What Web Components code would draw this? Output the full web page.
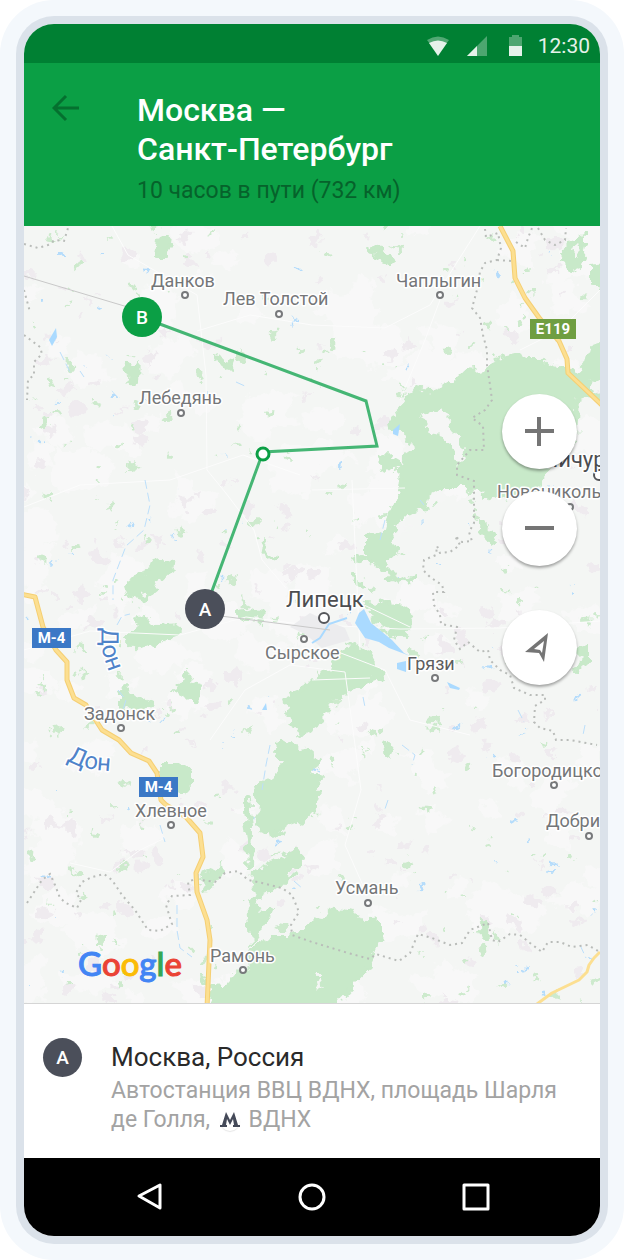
<!DOCTYPE html>
<html lang="ru">
<head>
<meta charset="utf-8">
<meta name="viewport" content="width=device-width, initial-scale=1">
<title>Москва — Санкт-Петербург</title>
<style>
  body {
    margin: 0;
    background: #fff;
    font-family: Roboto, "Liberation Sans", sans-serif;
  }
</style>
</head>
<body>
<phone-frame>
  <status-bar>12:30</status-bar>
  <route-header>
    <span slot="title">Москва —<br>Санкт-Петербург</span>
    <span slot="info">10 часов в пути (732 км)</span>
  </route-header>
  <route-map>
    <map-controls slot="controls"></map-controls>
  </route-map>
  <place-card>
    <point-badge slot="badge">A</point-badge>
    <span slot="name">Москва, Россия</span>
    <span slot="address">Автостанция ВВЦ ВДНХ, площадь Шарля де Голля, <metro-sign></metro-sign> ВДНХ</span>
  </place-card>
  <nav-bar></nav-bar>
</phone-frame>

<script>
function define(name, html, setup) {
    customElements.define(name, class extends HTMLElement {
        constructor() {
            super();
            const root = this.attachShadow({mode: 'open'});
            root.innerHTML = html;
            if (setup) setup(root);
        }
    });
}

define('phone-frame', `
<style>
    :host {
        display: flex;
        box-sizing: border-box;
        min-height: 100vh;
        padding: 16px;
        border-radius: 54px;
        background: #f4f8fc;
    }
    .bezel {
        display: flex;
        flex: 1;
        min-width: 0;
        padding: 8px;
        border-radius: 38px;
        background: #dbe2ea;
    }
    .screen {
        display: flex;
        flex-direction: column;
        flex: 1;
        min-width: 0;
        overflow: hidden;
        border-radius: 30px;
        background: #fff;
    }
</style>
<div class="bezel"><main class="screen"><slot></slot></main></div>`);

define('status-bar', `
<style>
    :host {
        display: flex;
        align-items: center;
        justify-content: flex-end;
        gap: 18px;
        padding: 8px 10px 3px;
        background: #008033;
        color: #e5f2ea;
        font-size: 21px;
        line-height: 28px;
    }
    svg { display: block; }
    .time { margin-left: -6px; }
</style>
<svg width="22" height="20" viewBox="0 0 22 20">
    <path d="M0 4Q11-3 22 4L19 8Q11 2 3 8Z" fill="#fff" opacity=".32"/>
    <path d="M2 7Q11 2 20 7L11 20Z" fill="#e5f2ea"/>
</svg>
<svg width="20" height="20" viewBox="0 0 20 20">
    <path d="M20 0V20H0Z" fill="#fff" opacity=".3"/>
    <path d="M10 10V20H0Z" fill="#e5f2ea"/>
</svg>
<svg width="21" height="22" viewBox="-4 0 21 22">
    <path d="M3 2V0H10V2H13V11H0V2Z" fill="#fff" opacity=".3"/>
    <path d="M0 11H13V21H0Z" fill="#e5f2ea"/>
</svg>
<span class="time"><slot></slot></span>`);

define('route-header', `
<style>
    :host {
        display: flex;
        align-items: flex-start;
        gap: 54px;
        padding: 28px 24px 19px;
        background: #0b9f45;
    }
    button {
        padding: 3px 4px;
        border: 0;
        background: none;
        cursor: pointer;
    }
    svg { display: block; }
    h1 {
        margin: 0;
        color: #fff;
        font-size: 32px;
        font-weight: 500;
        line-height: 39px;
    }
    p {
        margin: 0;
        padding-top: 6px;
        color: #06622b;
        font-size: 23px;
        line-height: 32px;
    }
</style>
<button type="button" aria-label="Назад">
    <svg width="27" height="28" viewBox="0 0 27 28" fill="none" stroke="#05702f" stroke-width="3">
        <path d="M27 14H3M14 2L2 14L14 26"/>
    </svg>
</button>
<div>
    <h1><slot name="title"></slot></h1>
    <p><slot name="info"></slot></p>
</div>`);

define('map-controls', `
<style>
    :host {
        display: flex;
        flex-direction: column;
        gap: 22px;
    }
    button {
        display: grid;
        place-items: center;
        width: 75px;
        height: 75px;
        padding: 0;
        border: 0;
        border-radius: 50%;
        background: #fff;
        box-shadow: 0 2px 3px rgba(0, 0, 0, .35);
        cursor: pointer;
    }
    .locate { margin-top: 22px; }
</style>
<button type="button" aria-label="Увеличить">
    <svg width="29" height="29" stroke="#757575" stroke-width="4"><path d="M0 14H29M14 0V29"/></svg>
</button>
<button type="button" aria-label="Уменьшить">
    <svg width="29" height="29" stroke="#757575" stroke-width="4"><path d="M0 14H29"/></svg>
</button>
<button class="locate" type="button" aria-label="Моё местоположение">
    <svg width="29" height="29">
        <path d="M23 0L0 19L14 20L19 29ZM19 8L17 20L15 17L9 16Z" fill="#757575" fill-rule="evenodd"/>
    </svg>
</button>`);

define('point-badge', `
<style>
    :host {
        display: grid;
        place-items: center;
        flex: none;
        width: 39px;
        height: 39px;
        border-radius: 50%;
        background: #4b4f5a;
        color: #fff;
        font-size: 19px;
        font-weight: 500;
    }
</style>
<slot></slot>`);

define('metro-sign', `
<style>
    :host {
        display: inline-block;
        width: 20px;
        margin: 0 3px 0 4px;
        border-radius: 50%;
        box-shadow: 0 1px 1px rgba(0, 0, 0, .1);
        vertical-align: -4px;
    }
    svg { display: block; }
</style>
<svg width="20" height="20" viewBox="0 0 20 20" role="img" aria-label="Метро">
    <path d="M6 1L10 9L14 1L18 14H20V16H13V14H14L13 8L10 14L7 8L6 14H7V16H0V14H2Z" fill="#444958"/>
</svg>`);

define('place-card', `
<style>
    :host {
        display: flex;
        align-items: flex-start;
        gap: 29px;
        padding: 34px 24px 24px 19px;
        background: #fff;
    }
    h2 {
        margin: 0;
        padding-top: 2px;
        color: #2a2a2a;
        font-size: 26px;
        font-weight: 400;
        line-height: 34px;
    }
    p {
        margin: 0;
        padding-top: 2px;
        color: #a3a3a3;
        font-size: 23px;
        line-height: 29px;
    }
</style>
<slot name="badge"></slot>
<div>
    <h2><slot name="name"></slot></h2>
    <p><slot name="address"></slot></p>
</div>`);

define('nav-bar', `
<style>
    :host {
        display: flex;
        justify-content: center;
        gap: 126px;
        padding: 20px 0;
        background: #000;
    }
    button {
        padding: 4px;
        border: 0;
        background: none;
        cursor: pointer;
    }
    svg {
        display: block;
        fill: none;
        stroke: #fff;
        stroke-width: 3;
        stroke-linejoin: round;
    }
</style>
<button type="button" aria-label="Назад"><svg width="30" height="30"><path d="M27 3V26L6 14Z"/></svg></button>
<button type="button" aria-label="Домой"><svg width="30" height="30"><circle cx="15" cy="15" r="12"/></svg></button>
<button type="button" aria-label="Недавние"><svg width="30" height="30"><path d="M3 3H27V27H3Z"/></svg></button>`);

// name, text x, baseline, dot x, dot y, class
const towns = [
    ['Данков', 151, 287, 185, 295],
    ['Лев Толстой', 223, 305, 279, 314],
    ['Чаплыгин', 396, 287, 440, 295],
    ['Лебедянь', 139, 404, 181, 413],
    ['Мичуринск', 539, 467, 599, 475, 'city'],
    ['Новоникольское', 497, 498, 570, 507],
    ['Липецк', 286, 607, 324, 618, 'city'],
    ['Сырское', 265, 659, 304, 639],
    ['Грязи', 407, 670, 435, 678, 'dark'],
    ['Задонск', 84, 720, 121, 728],
    ['Хлевное', 135, 817, 171, 825],
    ['Богородицкое', 492, 777, 554, 785],
    ['Добринка', 546, 827, 589, 836],
    ['Усмань', 335, 894, 368, 903],
    ['Рамонь', 210, 962, 243, 970]
];

const forests = [
    '405,403 415,388 432,391 452,383 465,371 489,368 494,358 503,356 515,353 525,358 539,358 550,369 560,366 575,373 585,363 590,346 604,341 604,378 588,381 592,392 604,395 604,403 588,396 578,398 576,440 545,473 542,487 529,497 512,497 500,494 485,500 475,487 443,487 442,494 432,507 420,508 405,517 398,530 390,535 397,552 382,568 367,560 367,537 385,533 390,513 399,488 402,466 412,443 402,429 392,432 390,423 398,410',
    '364,602 382,603 394,600 415,617 410,627 399,638 379,627',
    '337,650 355,643 365,650 375,667 381,676 370,680 352,690 332,700 322,725 304,735 291,727 294,717 286,710 284,697 304,688 315,676 330,670',
    '276,743 290,741 300,752 314,750 319,760 313,774 325,777 314,793 319,807 307,820 285,829 271,837 257,827 259,807 254,787 267,780 287,763 274,753',
    '254,873 271,863 297,850 306,857 301,868 284,880 270,893 257,898 253,886',
    '254,947 271,937 291,937 314,922 332,908 345,910 355,913 362,922 380,920 380,933 375,953 365,973 349,990 332,1010 210,1010 214,988 201,977 224,987 237,973 247,968',
    '160,763 180,763 191,770 191,788 181,792 160,787',
    '201,877 221,865 222,873 207,892',
    '126,580 147,573 154,562 163,561 174,568 172,573 157,580 155,593 147,603 131,597',
    '127,640 136,620 145,619 152,627 177,624 181,633 165,639 157,647 138,651',
    '174,690 182,687 187,670 193,681 202,687 202,694 194,703 186,696',
    '366,249 381,245 392,260 391,265 378,256',
    '560,262 570,239 587,233 587,245 582,265 571,269',
    '592,266 604,264 604,290 592,283',
    '157,239 164,236 170,236 168,256 155,256',
    '126,361 132,368 139,359 138,378 131,382',
    '379,456 390,455 404,463 391,470 386,474',
    '382,753 388,742 397,753 389,757',
    '350,558 362,553 366,562 355,565',
    '354,574 365,580 366,587 357,584',
    '385,566 392,578 405,581 418,575 417,579 400,585 390,582',
    '580,648 588,646 588,662 578,671',
    '480,520 488,527 495,543 488,540 479,530',
    '478,930 486,922 488,939 480,941',
    '238,611 250,609 265,612 262,619 244,620',
    '216,356 234,361 231,368 220,364',
    '262,538 268,555 279,557 268,560 261,550',
    '122,690 126,682 130,695 152,701 148,709 132,705 122,716',
    '244,800 249,798 252,830 251,868 247,870 248,840',
    '249,897 255,895 259,912 272,910 266,922 256,936 252,944'
];

// clearings inside the forests
const clearings = [
    '420,413 432,417 440,408 447,417 450,426 460,439 463,461 457,467 451,448 442,436 430,434',
    '571,249 578,243 580,252 574,258',
    '430,498 446,488 450,498 436,508',
    '317,978 321,978 323,989 319,986',
    '394,524 408,520 410,530 398,538',
    '141,590 147,589 148,594 143,597'
];

const lakes = [
    '355,623 359,613 364,609 371,623 392,640 404,653 410,656 389,648 379,642 365,638',
    '397,663 406,661 406,672 397,669',
    '393,430 400,424 398,436 393,434',
    '49,340 56,328 57,337 52,346',
    '262,710 266,703 267,710',
    '447,682 460,688 459,690 450,688'
];

const roads = [
    'M500 226L513 251L515 278L525 298L540 319L559 341L567 359L568 373L604 407',
    'M20 594L35 597L43 627L56 650L67 662L67 680L74 698L86 705L102 730L119 740L131 753L149 761L157 773L161 800L166 805L186 817L200 833L203 857L196 873L197 892L207 920L210 940L207 1008',
    'M537 1004L552 993L579 980L587 972L589 965L594 958L600 952'
];

const borders = [
    'M24 244L38 248L48 245L55 240L64 241L68 228',
    'M24 290L30 312M24 335L40 347L42 354L34 362L34 375L28 380L27 400',
    'M485 229L486 237L498 233L501 248L497 260L485 263L480 272L477 290L472 308L480 318L483 335L487 350L487 365L490 385L492 400L485 410L472 418L483 426L484 450L470 450L457 465L457 475L474 481L474 523L469 532L472 541L462 542L455 536L460 545L450 552L440 553L437 546L436 555L424 560L423 570L430 577L442 585L444 592L433 592L434 605L440 615L441 624L457 627L454 640L460 649L468 642L480 652L488 650L490 660L500 670L510 675L514 688L530 695L545 695L545 700L535 706L534 722L540 728L553 731L556 740L570 740L597 745',
    'M497 260L512 261M516 242L525 248L528 238L532 228M538 228L545 240L555 245L565 240L566 228',
    'M27 903L42 880L50 874L55 885L60 898L66 903L77 908L81 900L76 893L82 882L92 877L104 874L112 880L122 895L135 910L148 930L160 931L172 924L166 905L172 896L190 895L188 882L195 879L215 882L225 873L238 871L248 880L262 883L282 888L292 895L299 912L291 925L292 935L312 942L348 953L370 959L376 954L399 961L410 953L418 934L432 938L450 945L462 943L470 930L488 923L492 940L498 942L510 934L520 935L530 943L542 952L548 942L560 942L572 947L588 945L600 952'
];

const lanes = [
    'M112 226L128 255L197 295L206 375L207 470L225 492L254 530L262 560L286 588',
    'M24 507L80 485L170 480L243 455L300 475',
    'M24 650L90 631L180 635L246 617L300 624L400 629L500 628L600 621',
    'M197 331L250 315L312 325L385 328L430 305L480 226',
    'M320 645L385 670L410 720L470 735M352 480L360 650',
    'M210 740L245 690L290 665L345 672L355 745L361 790L345 845L365 890',
    'M70 863L110 872L140 850L165 838M312 680L370 678',
    'M600 290L560 330L520 350M400 400L425 340L440 300',
    'M312 490L405 488M364 605L410 627'
];

const streams = [
    'M145 480L150 505L144 530L126 546L113 580L113 600',
    'M117 625L122 616L130 614M118 690L126 700L123 710',
    'M160 825L165 842M177 905L177 930L180 948L192 957',
    'M385 520L380 540M420 500L424 505M236 382L247 387M84 377L80 371M60 352L70 372',
    'M402 745L415 755L412 765M294 881L303 889M270 745L266 765L262 790',
    'M585 725L583 735M518 710L524 722M388 800L384 812M580 945L586 958M363 697L365 707'
];

// steady pseudo-random numbers for the small patches of the terrain
function randomizer(seed) {
    return () => (seed = (seed * 16807) % 2147483647) / 2147483647;
}

function patches(count, seed, size) {
    const rnd = randomizer(seed);
    let d = '';
    for (let i = 0; i < count; i++) {
        const x = 24 + rnd() * 576;
        const y = 226 + rnd() * 778;
        const r = size * (.4 + rnd());
        const turn = rnd() * 6;
        for (let k = 0; k < 7; k++) {
            const a = turn + k * .9;
            const len = r * (.3 + rnd() * .8);
            d += (k ? 'L' : 'M') + (x + Math.cos(a) * len).toFixed(1) + ' ' + (y + Math.sin(a) * len * .8).toFixed(1);
        }
        d += 'Z';
    }
    return d;
}

const polygons = list => list.map(p => `<polygon points="${p}"/>`).join('');
const paths = list => list.map(d => `<path d="${d}"/>`).join('');
const shield = (x, y, w, text, fill) => `
    <rect x="${x}" y="${y}" width="${w}" height="20" fill="${fill}"/>
    <text class="shield" x="${x + w / 2}" y="${y + 15}">${text}</text>`;
const marker = (x, y, text, fill) => `
    <circle cx="${x}" cy="${y}" r="20" fill="${fill}"/>
    <text class="marker" x="${x}" y="${y + 7}">${text}</text>`;

define('route-map', `
<style>
    :host {
        display: block;
        position: relative;
        flex: 1;
        min-height: 480px;
        overflow: hidden;
        border-bottom: 1px solid #d5d5d5;
        background: #f4f6f4;
    }
    .map {
        position: absolute;
        width: 100%;
        height: 100%;
    }
    .town, .river {
        fill: #747678;
        font-size: 18px;
        stroke: #fff;
        stroke-width: 3px;
        stroke-linejoin: round;
        paint-order: stroke;
    }
    .city { fill: #4c4d50; font-size: 22px; }
    .dark { fill: #5c5d60; }
    .dot { fill: #fff; stroke: #77797b; stroke-width: 2; }
    .dot.city { stroke: #55565a; }
    .river {
        fill: #4f83c9;
        font-size: 24px;
    }
    .shield {
        fill: #fff;
        font-size: 15px;
        font-weight: 700;
        text-anchor: middle;
    }
    .marker {
        fill: #fff;
        font-size: 19px;
        font-weight: 500;
        text-anchor: middle;
    }
    .logo {
        position: absolute;
        left: 54px;
        bottom: 20px;
        font-family: Lato, sans-serif;
        font-size: 33px;
        font-weight: 500;
        line-height: 40px;
        -webkit-text-stroke: 1px currentColor;
    }
    .blue { color: #4285f4; }
    .red { color: #ea4335; }
    .yellow { color: #fbbc05; }
    .green { color: #34a853; }
    slot[name=controls] {
        display: block;
        position: absolute;
        top: 168px;
        right: 23px;
    }
</style>
<svg class="map" viewBox="24 226 576 777" preserveAspectRatio="xMidYMid slice" role="img" aria-label="Карта маршрута"></svg>
<div class="logo"><span class="blue">G</span><span class="red">o</span><span class="yellow">o</span><span class="blue">g</span><span class="green">l</span><span class="red">e</span></div>
<slot name="controls"></slot>`, root => {
    root.querySelector('.map').innerHTML = `
        <filter id="rough" filterUnits="userSpaceOnUse" x="0" y="200" width="624" height="830">
            <feTurbulence type="fractalNoise" baseFrequency=".09" numOctaves="3" seed="4"/>
            <feDisplacementMap in="SourceGraphic" scale="17" xChannelSelector="R" yChannelSelector="G"/>
        </filter>
        <g filter="url(#rough)">
            <path d="${patches(150, 91, 30)}" fill="#f8f8f8"/>
            <path d="${patches(230, 7, 8)}" fill="#efebef"/>
            <path d="${patches(260, 43, 5)}" fill="#cdeacd"/>
            <path d="${patches(90, 19, 3)}" fill="#b5dcfb"/>
            <g fill="#c8e9c9" stroke="#c8e9c9" stroke-width="2" stroke-linejoin="round">${polygons(forests)}</g>
            <g fill="#f5f6f5">${polygons(clearings)}</g>
        </g>
        <g fill="none" stroke="#fcfcfc" stroke-width="1">${paths(lanes)}</g>
        <polygon points="290,627 310,613 325,620 345,628 350,640 322,648 305,634" fill="#ececee"/>
        <g fill="none" stroke="#bcdffb" stroke-width="1" stroke-dasharray="9 4">${paths(streams)}</g>
        <path d="M312 643L320 638L329 624L347 618" fill="none" stroke="#aadaff" stroke-width="2"/>
        <g fill="#aadaff">${polygons(lakes)}</g>
        <g fill="none" stroke="#b9bcb9" stroke-width="2" stroke-dasharray="2 4">${paths(borders)}</g>
        <g fill="none" stroke="#f5cf73" stroke-width="5" stroke-linejoin="round">${paths(roads.slice(0, 2))}</g>
        <g fill="none" stroke="#fcdf91" stroke-width="3" stroke-linejoin="round">${paths(roads)}</g>
        <path d="M24 276L141 311M205 614L330 630" fill="none" stroke="#c8c8c8" stroke-width="1"/>
        <path id="don-north" d="M102 628Q98 655 118 690" fill="none"/>
        <path id="don-south" d="M67 760Q86 773 130 771" fill="none"/>
        <text class="river"><textPath href="#don-north">Дон</textPath></text>
        <text class="river"><textPath href="#don-south">Дон</textPath></text>
        ${towns.map(([name, x, y, cx, cy, cls = '']) => `
            <circle class="dot ${cls}" cx="${cx}" cy="${cy}" r="${cls == 'city' ? 5 : 3}"/>
            <text class="town ${cls}" x="${x}" y="${y}">${name}</text>`).join('')}
        ${shield(530, 319, 46, 'E119', '#6f9e41')}
        ${shield(32, 628, 39, 'М-4', '#3b78c6')}
        ${shield(139, 777, 39, 'М-4', '#3b78c6')}
        <path d="M141 317L366 401L377 446L263 452L205 610" fill="none" stroke="#45b674" stroke-width="3"/>
        <circle cx="263" cy="454" r="6" fill="#fff" stroke="#0b9f45" stroke-width="3"/>
        ${marker(142, 317, 'B', '#0b9f45')}
        ${marker(205, 609, 'A', '#4b4f5a')}`;
});
</script>
</body>
</html>
